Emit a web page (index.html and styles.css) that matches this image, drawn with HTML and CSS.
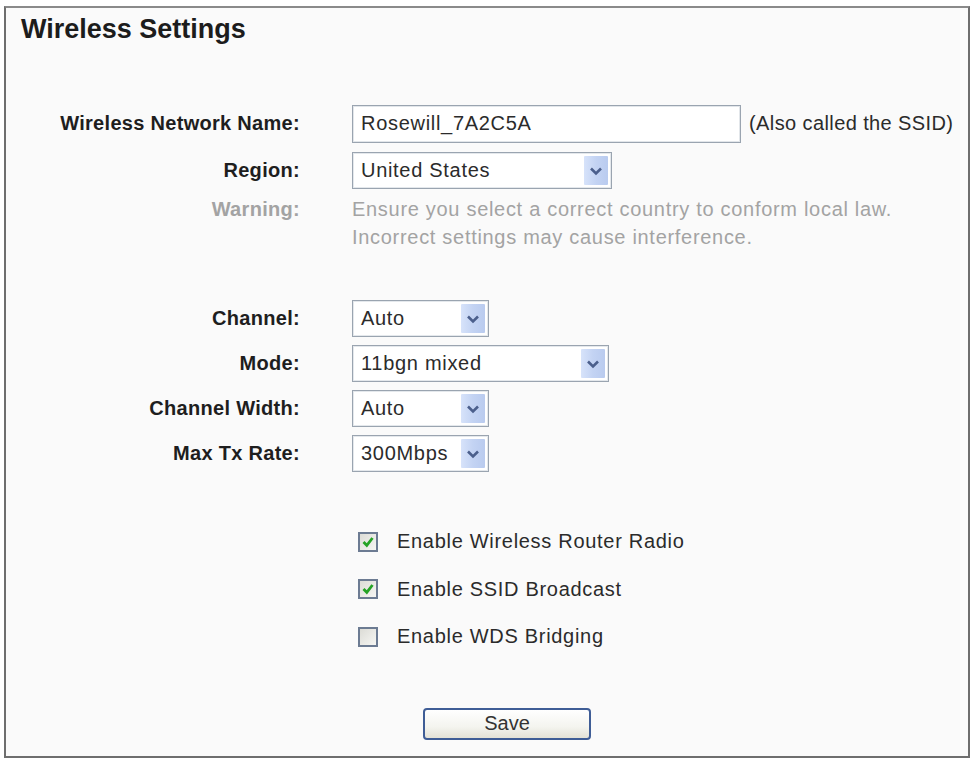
FILE: index.html
```html
<!DOCTYPE html>
<html lang="en">
<head>
    <meta charset="UTF-8">
    <title>Wireless Settings</title>
    <link rel="stylesheet" href="styles.css">
</head>
<body>
    <div class="panel">
        <h1 class="title">Wireless Settings</h1>

        <div class="form">
            <div class="row">
                <div class="label">Wireless Network Name:</div>
                <div class="field">
                    <input class="textbox" type="text" value="Rosewill_7A2C5A">
                    <span class="note">(Also called the SSID)</span>
                </div>
            </div>
            <div class="row">
                <div class="label">Region:</div>
                <div class="field">
                    <div class="select select-wide">
                        <span class="value">United States</span>
                        <span class="arrow"><svg width="14" height="10" viewBox="0 0 14 10"><path d="M2 2.5 L7 7.5 L12 2.5" fill="none" stroke="#4b5f8c" stroke-width="2.6"/></svg></span>
                    </div>
                </div>
            </div>
            <div class="row row-warning">
                <div class="label muted">Warning:</div>
                <div class="field muted">Ensure you select a correct country to conform local law.<br>Incorrect settings may cause interference.</div>
            </div>

            <div class="group">
                <div class="row row-select">
                    <div class="label">Channel:</div>
                    <div class="field">
                        <div class="select">
                            <span class="value">Auto</span>
                            <span class="arrow"><svg width="14" height="10" viewBox="0 0 14 10"><path d="M2 2.5 L7 7.5 L12 2.5" fill="none" stroke="#4b5f8c" stroke-width="2.6"/></svg></span>
                        </div>
                    </div>
                </div>
                <div class="row row-select">
                    <div class="label">Mode:</div>
                    <div class="field">
                        <div class="select select-mode">
                            <span class="value">11bgn mixed</span>
                            <span class="arrow"><svg width="14" height="10" viewBox="0 0 14 10"><path d="M2 2.5 L7 7.5 L12 2.5" fill="none" stroke="#4b5f8c" stroke-width="2.6"/></svg></span>
                        </div>
                    </div>
                </div>
                <div class="row row-select">
                    <div class="label">Channel Width:</div>
                    <div class="field">
                        <div class="select">
                            <span class="value">Auto</span>
                            <span class="arrow"><svg width="14" height="10" viewBox="0 0 14 10"><path d="M2 2.5 L7 7.5 L12 2.5" fill="none" stroke="#4b5f8c" stroke-width="2.6"/></svg></span>
                        </div>
                    </div>
                </div>
                <div class="row row-select">
                    <div class="label">Max Tx Rate:</div>
                    <div class="field">
                        <div class="select">
                            <span class="value">300Mbps</span>
                            <span class="arrow"><svg width="14" height="10" viewBox="0 0 14 10"><path d="M2 2.5 L7 7.5 L12 2.5" fill="none" stroke="#4b5f8c" stroke-width="2.6"/></svg></span>
                        </div>
                    </div>
                </div>
            </div>

            <div class="group checks">
                <div class="row row-check">
                    <div class="label"></div>
                    <div class="field">
                        <span class="checkbox"><svg width="14" height="14" viewBox="0 0 14 14"><path d="M2.5 7 L5.8 10.3 L11.5 3" fill="none" stroke="#25a325" stroke-width="2.8"/></svg></span>
                        <span>Enable Wireless Router Radio</span>
                    </div>
                </div>
                <div class="row row-check">
                    <div class="label"></div>
                    <div class="field">
                        <span class="checkbox"><svg width="14" height="14" viewBox="0 0 14 14"><path d="M2.5 7 L5.8 10.3 L11.5 3" fill="none" stroke="#25a325" stroke-width="2.8"/></svg></span>
                        <span>Enable SSID Broadcast</span>
                    </div>
                </div>
                <div class="row row-check">
                    <div class="label"></div>
                    <div class="field">
                        <span class="checkbox"></span>
                        <span>Enable WDS Bridging</span>
                    </div>
                </div>
            </div>

            <div class="row row-save">
                <div class="label"></div>
                <div class="field">
                    <button class="button">Save</button>
                </div>
            </div>
        </div>
    </div>
</body>
</html>
```

FILE: styles.css
```css
body {
    margin: 0;
    padding: 0;
    background-color: #ffffff;
    font-family: "Liberation Sans", Arial, sans-serif;
    color: #2b2b2b;
}
.panel {
    margin: 6px 3px 0 4px;
    height: 752px;
    box-sizing: border-box;
    border: 2px solid #6e6e6e;
    border-top-color: #8a8a8a;
    background: #fafafa;
}
.title {
    margin: 0;
    padding: 6px 0 0 15px;
    font-size: 27px;
    line-height: 31px;
    font-weight: bold;
    color: #1c1c1c;
}
.form {
    margin-top: 55px;
}
.row {
    display: grid;
    grid-template-columns: 294px 1fr;
    column-gap: 52px;
    align-items: center;
    height: 47px;
    font-size: 20px;
    letter-spacing: 0.7px;
}
.label {
    text-align: right;
    font-weight: bold;
    letter-spacing: 0.3px;
    color: #1e1e1e;
}
.field {
    display: flex;
    align-items: center;
}
.muted {
    color: #a3a3a3;
}
.row-warning {
    height: 56px;
    margin-top: 1px;
    line-height: 28px;
    align-items: start;
}
.row-warning .field {
    display: block;
}
.group {
    margin-top: 45px;
}
.row-select {
    height: 45px;
}
.textbox {
    width: 389px;
    height: 38px;
    box-sizing: border-box;
    border: 1px solid #9aa4b0;
    box-shadow: inset 0 0 0 1px #e2e6ea;
    background: #ffffff;
    padding: 0 8px;
    font-family: "Liberation Sans", Arial, sans-serif;
    font-size: 20px;
    letter-spacing: 0.7px;
    color: #2b2b2b;
    outline: none;
}
.note {
    margin-left: 8px;
    letter-spacing: 0.4px;
}
.select {
    display: flex;
    align-items: center;
    justify-content: space-between;
    width: 137px;
    height: 37px;
    box-sizing: border-box;
    border: 1px solid #9aa4b0;
    box-shadow: inset 0 0 0 1px #e4e8ec;
    background: #ffffff;
    padding: 0 3px 0 8px;
}
.select-wide {
    width: 260px;
}
.select-mode {
    width: 257px;
}
.arrow {
    display: flex;
    align-items: center;
    justify-content: center;
    width: 24px;
    height: 29px;
    background: linear-gradient(to right, #d7e3fa, #c3d3f3 50%, #b9cbef);
    border-radius: 1px;
}
.checks {
    margin-top: 42px;
}
.row-check {
    height: 47.5px;
}
.checkbox {
    display: flex;
    align-items: center;
    justify-content: center;
    width: 20px;
    height: 20px;
    box-sizing: border-box;
    margin: 0 19px 0 6px;
    border: 2px solid #6c7b92;
    background: linear-gradient(135deg, #dcdcd6, #f6f6f3);
}
.row-save {
    margin-top: 47px;
    height: 32px;
}
.button {
    margin-left: 71px;
    width: 168px;
    height: 32px;
    border: 2px solid #3f5d96;
    border-radius: 4px;
    background: linear-gradient(to bottom, #ffffff, #f4f4ef 60%, #e4e2d6);
    font-family: "Liberation Sans", Arial, sans-serif;
    font-size: 20px;
    color: #333333;
    cursor: pointer;
}
```
